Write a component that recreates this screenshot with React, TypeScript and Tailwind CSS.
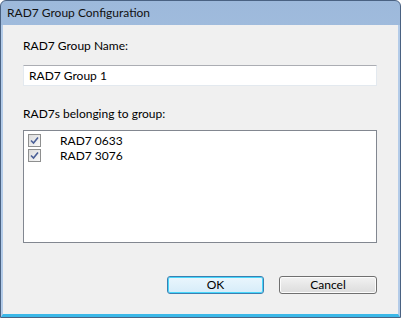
import { useState } from "react";

const font = { fontFamily: 'Lato, "Liberation Sans", sans-serif' };

function Check({ checked, onChange }: { checked: boolean; onChange: () => void }) {
  return (
    <button
      onClick={onChange}
      className="flex h-[13px] w-[13px] shrink-0 items-center justify-center border border-[#8e8f8f] bg-gradient-to-br from-[#dcdcdc] to-[#f8f8f8] p-0"
    >
      {checked && (
        <svg width="9" height="9" viewBox="0 0 9 9">
          <path d="M1 4.5 L3.5 7 L8 1.5" fill="none" stroke="#4a5f97" strokeWidth="1.6" />
        </svg>
      )}
    </button>
  );
}

export default function App() {
  const [name, setName] = useState("RAD7 Group 1");
  const [items, setItems] = useState([
    { id: "RAD7 0633", on: true },
    { id: "RAD7 3076", on: true },
  ]);

  const toggle = (i: number) =>
    setItems(items.map((it, j) => (j === i ? { ...it, on: !it.on } : it)));

  return (
    <div
      className="flex h-[318px] w-[401px] flex-col overflow-hidden rounded-t-[6px] border border-[#4a6282] bg-gradient-to-b from-[#9db9db] to-[#bad3ee] text-[12px] text-black"
      style={font}
    >
      <div className="flex h-[24px] shrink-0 items-center pl-[6px] text-[12px] text-[#111]">
        RAD7 Group Configuration
      </div>
      <div className="flex flex-1 flex-col border-x-[2px] border-b-[3px] border-x-[#b3cbe8] border-b-[#3bb8e8] bg-[#f0f0f0] px-[20px]">
        <div className="mt-[13px] leading-[16px]">RAD7 Group Name:</div>
        <input
          value={name}
          onChange={(e) => setName(e.target.value)}
          className="mt-[11px] h-[21px] w-[354px] border border-[#e3e9ef] border-t-[#abadb3] bg-white px-[5px] text-[12px] outline-none"
          style={font}
        />
        <div className="mt-[20px] leading-[16px]">RAD7s belonging to group:</div>
        <div className="mt-[8px] h-[113px] w-[354px] border border-[#828790] bg-white pl-[4px] pt-[2px]">
          {items.map((it, i) => (
            <div key={it.id} className="flex h-[15px] items-center">
              <Check checked={it.on} onChange={() => toggle(i)} />
              <span className="ml-[19px] leading-[14px]">{it.id}</span>
            </div>
          ))}
        </div>
        <div className="mt-[33px] flex w-[354px] justify-end gap-[15px]">
          <button
            className="h-[18px] w-[97px] rounded-[3px] border border-[#3c7fb1] bg-gradient-to-b from-[#eaf6fd] to-[#d6ecf9] text-[12px] leading-[14px] shadow-[inset_0_0_0_1px_#48d7fb]"
            style={font}
          >
            OK
          </button>
          <button
            className="h-[18px] w-[98px] rounded-[3px] border border-[#707070] bg-gradient-to-b from-[#f2f2f2] to-[#dcdcdc] text-[12px] leading-[14px] shadow-[inset_0_0_0_1px_#fcfcfc]"
            style={font}
          >
            Cancel
          </button>
        </div>
      </div>
    </div>
  );
}
